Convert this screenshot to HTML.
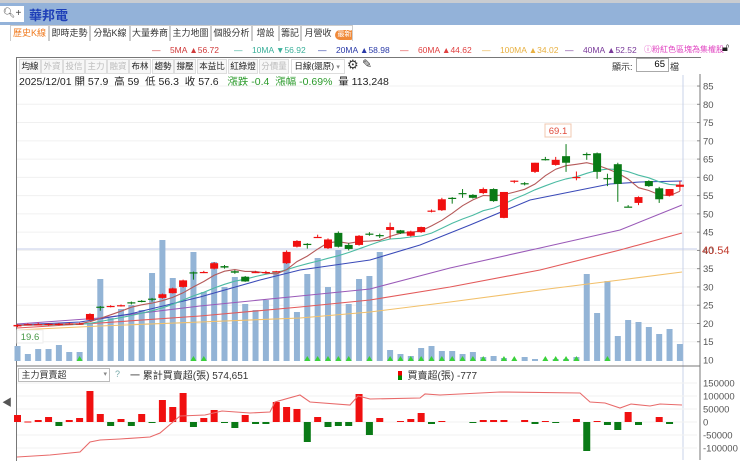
<!DOCTYPE html>
<html><head><meta charset="utf-8"><style>
body{margin:0;width:740px;height:460px;overflow:hidden;background:#fff;font-family:"Liberation Sans","Noto Sans CJK TC",sans-serif;position:relative}
.a{position:absolute;white-space:nowrap}
.tab{position:absolute;top:25px;height:15px;border:1px solid #ccc;border-bottom:none;font-size:9px;line-height:15px;text-align:center;color:#333;background:#fff;white-space:nowrap;overflow:hidden}
.tb{position:absolute;top:59px;height:13px;font-size:8.5px;line-height:13px;text-align:center;border:1px solid #ddd;background:#f7f7f7;color:#222;white-space:nowrap;overflow:hidden}
.g{color:#bbb}
.lg{position:absolute;top:45px;font-size:8.5px;white-space:nowrap}
</style></head><body>
<div class="a" style="left:0;top:0;width:740px;height:3px;background:#c9ccd1"></div>
<div class="a" style="left:0;top:3px;width:740px;height:22px;background:#93b2d9"></div>
<div class="a" style="left:0;top:6px;width:24px;height:16px;background:#fff;font-size:10px;line-height:16px;color:#444">&nbsp;🔍︎+</div>
<div class="a" style="left:29px;top:5px;font-size:13px;font-weight:bold;color:#1e3fb8">華邦電</div>
<div class="tab" style="left:10px;width:37px;color:#f07a1e">歷史K線</div>
<div class="tab" style="left:49px;width:39px">即時走勢</div>
<div class="tab" style="left:90px;width:38px">分點K線</div>
<div class="tab" style="left:130px;width:38px">大量券商</div>
<div class="tab" style="left:170px;width:39px">主力地圖</div>
<div class="tab" style="left:211px;width:39px">個股分析</div>
<div class="tab" style="left:252px;width:25px">增設</div>
<div class="tab" style="left:279px;width:20px">籌記</div>
<div class="tab" style="left:301px;width:50px;text-align:left">&nbsp;月營收<span style="display:inline-block;margin-left:3px;background:#f08a3a;color:#fff;border-radius:6px;font-size:7px;line-height:10px;padding:0 3px">最新</span></div>
<div class="lg" style="left:152px;color:#d03a3a">—&nbsp;&nbsp;&nbsp;&nbsp;5MA ▲56.72</div>
<div class="lg" style="left:234px;color:#3ab09a">—&nbsp;&nbsp;&nbsp;&nbsp;10MA ▼56.92</div>
<div class="lg" style="left:318px;color:#2a3aa8">—&nbsp;&nbsp;&nbsp;&nbsp;20MA ▲58.98</div>
<div class="lg" style="left:400px;color:#e04040">—&nbsp;&nbsp;&nbsp;&nbsp;60MA ▲44.62</div>
<div class="lg" style="left:482px;color:#e8b040">—&nbsp;&nbsp;&nbsp;&nbsp;100MA ▲34.02</div>
<div class="lg" style="left:565px;color:#7a3a9a">—&nbsp;&nbsp;&nbsp;&nbsp;40MA ▲52.52</div>
<div class="lg" style="left:644px;top:44px;font-size:8px;color:#e040c0">ⓘ粉紅色區塊為集權股</div>
<div class="a" style="top:42px;left:722px;font-size:11px;color:#222">🔓︎</div>
<div class="a" style="left:16px;top:57px;width:684px;height:403px;border-left:1px solid #777;border-top:1px solid #777"></div>
<div class="tb" style="left:19px;width:20px">均線</div>
<div class="tb g" style="left:41px;width:20px">外資</div>
<div class="tb g" style="left:63px;width:20px">投信</div>
<div class="tb g" style="left:85px;width:20px">主力</div>
<div class="tb g" style="left:107px;width:20px">融資</div>
<div class="tb" style="left:129px;width:20px">布林</div>
<div class="tb" style="left:152px;width:20px">趨勢</div>
<div class="tb" style="left:174px;width:20px">撐壓</div>
<div class="tb" style="left:197px;width:28px">本益比</div>
<div class="tb" style="left:228px;width:28px">紅綠燈</div>
<div class="tb g" style="left:259px;width:28px">分價量</div>
<div class="tb" style="left:291px;width:52px;background:#fff;text-align:left">&nbsp;日線(還原) <span style="color:#888;font-size:7px">▾</span></div>
<div class="a" style="left:347px;top:57px;font-size:13px;color:#333">⚙</div>
<div class="a" style="left:362px;top:57px;font-size:12px;color:#333">✎</div>
<div class="a" style="left:612px;top:60px;font-size:9px;color:#333">顯示:</div>
<div class="a" style="left:636px;top:58px;width:28px;height:12px;border:1px solid #aaa;font-size:9.5px;text-align:right;line-height:12px;padding-right:3px">65</div>
<div class="a" style="left:670px;top:60px;font-size:9px;color:#333">檔</div>
<div class="a" style="left:19px;top:74px;font-size:10.5px;color:#222">2025/12/01 開 57.9&nbsp; 高 59&nbsp; 低 56.3&nbsp; 收 57.6&nbsp;&nbsp; <span style="color:#2a9a2a">漲跌 -0.4&nbsp; 漲幅 -0.69%</span>&nbsp; 量 113,248</div>
<div class="a" style="left:18px;top:368px;width:90px;height:12px;border:1px solid #bbb;font-size:9px;line-height:12px;color:#333">&nbsp;主力買賣超<span style="float:right;font-size:7px;color:#888">▾&nbsp;</span></div>
<div class="a" style="left:115px;top:369px;font-size:9px;color:#7aa">?</div>
<div class="a" style="left:130px;top:367px;font-size:10px;color:#333">一 累計買賣超(張) 574,651</div>
<div class="a" style="left:398px;top:367px;font-size:10px;color:#333"><span style="display:inline-block;width:4px;height:9px;background:linear-gradient(#e00 50%,#080 50%);vertical-align:-1px"></span>&nbsp; 買賣超(張) -777</div>
<div class="a" style="left:2px;top:394px;font-size:10px;color:#555">◀</div>
<svg class="a" style="left:0;top:0" width="740" height="460" id="s"></svg>
<script>
var s=document.getElementById('s'),h='';
function Y(p){return 360-(p-10)*3.653}
function X(i){return 17.5+10.35*i}
for(var p=15;p<=85;p+=5){var y=Y(p);h+='<line x1="17" x2="697" y1="'+y+'" y2="'+y+'" stroke="#f0f0f0"/>';h+='<text x="703" y="'+(y+3.5)+'" font-size="9.5" fill="#555" font-family="Liberation Sans">'+p+'</text><line x1="697" x2="700" y1="'+y+'" y2="'+y+'" stroke="#888"/>'}
h+='<text x="703" y="363.5" font-size="9.5" fill="#555" font-family="Liberation Sans">10</text>';
h+='<line x1="17" x2="697" y1="249" y2="249" stroke="#c4cce8"/><text x="702" y="254" font-size="11" fill="#c0392b" font-family="Liberation Sans">40.54</text>';
h+='<line x1="683" x2="683" y1="75" y2="460" stroke="#c9d3ea"/><line x1="700" x2="700" y1="74" y2="460" stroke="#777"/>';
h+='<line x1="17" x2="700" y1="366" y2="366" stroke="#777"/>';
var v=[346,354,349,349,345,352,352,323,279,318,309,305,310,273,240,278,287,252,292,262,287,277,304,310,300,273,253,312,274,258,287,250,304,279,276,252,350,354,356,348,346,351,351,354,352,357,356,358,361,357,359,361,359,359,357,274,313,281,336,320,322,327,334,329,344];
for(var i=0;i<65;i++)h+='<rect x="'+(X(i)-3)+'" y="'+v[i]+'" width="6" height="'+(361-v[i])+'" fill="#93b4d6"/>';
[6,17,18,28,29,30,31,32,34,36,37,38,39,40,41,42,43,44,45,47,48,51,52,53,54,57].forEach(function(i){h+='<polygon points="'+(X(i)-3)+',361 '+(X(i)+3)+',361 '+X(i)+',356" fill="#3ad13a"/>'});
var c=[[19.2,19.8,19,19.6],[19.8,20,19.6,19.8],[19.8,20.2,19.6,19.8],[19.6,20,19.4,19.9],[19.7,20.1,19.5,19.9],[19.9,20.2,19.7,20],[19.9,20.2,19.7,20],[21,22.8,20.8,22.6],[24.6,24.8,23.5,24.4],[24.6,25,24.4,24.8],[24.8,25.2,24.6,25],[25.8,26,25.2,25.5],[26.2,26.4,25.8,25.9],[26.8,27,26,26.7],[27,28.2,26.8,28],[28.3,29.8,28.2,29.6],[30,32,29.8,31.8],[34,34.2,32,33.9],[34,34.4,33.8,34.1],[35,36.8,34.8,36.5],[35.7,36,35,35.3],[34.3,34.6,33.6,33.9],[32.8,33,31.4,31.5],[34,34.4,33.8,34.1],[34,34.4,33.6,34.1],[34.2,34.4,34,34.3],[36.5,40,36.3,39.6],[41,42.8,40.8,42.6],[41.8,42,40.5,41.6],[43.6,44.3,43.4,43.7],[40.6,43.3,40.4,43],[44.8,45.2,40.8,41],[41.5,42,40,40.4],[41.5,44.2,41.3,44],[44.6,45,44,44.3],[44.2,44.6,43.4,44.1],[45.6,47.6,43.2,46.4],[45.5,45.6,44.5,44.7],[44,45.4,43.8,45.2],[45,46.5,44.8,46.4],[50.8,51.2,50.4,50.9],[51,54.4,50.8,54],[54.4,54.6,52.8,54.3],[55.7,56.8,54.4,55.6],[55.2,55.4,54.2,54.4],[55.7,57.2,55.4,56.8],[56.8,57,53.3,53.5],[48.9,56,48.8,56],[59,59.2,58.4,59.1],[58.4,58.7,57.8,58.3],[61.5,64,61.2,64],[65,65.6,64.6,64.9],[63.4,65.6,63.2,64.8],[65.8,69.1,61.5,64],[60,61.6,59.2,60.1],[66.4,66.8,64.8,66.3],[66.6,66.8,59.6,61.5],[59.8,61,57.6,59.7],[63.6,64,53.3,58.2],[52,52.4,51.8,51.9],[53,54.8,52.4,54.6],[59,59.2,57.4,57.6],[57,57.4,53,54],[55,56.8,54.8,56.8],[57.4,59,56.3,58],[57.9,58.2,57.4,57.6]];
var closes=[];for(i=0;i<65;i++)closes.push(c[i][3]);
function ma(n){var a=[];for(var i=0;i<65;i++){var t=0;for(var k=i-n+1;k<=i;k++)t+=(k<0?19.5:closes[k]);a.push(X(i)+','+Y(t/n).toFixed(1))}return a.join(' ')}
function pl(pts,col){h+='<polyline points="'+pts+'" fill="none" stroke="'+col+'" stroke-width="1.1"/>'}
pl('17,330 100,326 200,322 300,318 370,312 450,302 540,290 620,280 682,272','#f2c06a');
pl('17,328 100,323 200,316 300,307 370,300 450,287 540,270 620,250 682,233','#e35a5a');
pl('17,324 100,318 200,306 300,296 370,289 450,268 540,248 620,230 682,205','#9a5ab8');
pl('17,325 80,322 130,314 200,297 260,280 300,270 370,260 420,245 470,225 530,200 580,190 610,184 640,182 682,181','#3a4ab8');
pl(ma(10),'#4cbba3');pl(ma(5),'#b55a5a');
for(i=0;i<65;i++){var o=c[i][0],hi=c[i][1],lo=c[i][2],cl=c[i][3],col=cl>=o?'#f01010':'#0a7a16',x=X(i);
h+='<line x1="'+x+'" x2="'+x+'" y1="'+Y(hi)+'" y2="'+Y(lo)+'" stroke="'+col+'"/>';
var t=Y(Math.max(o,cl)),b=Y(Math.min(o,cl));h+='<rect x="'+(x-4)+'" y="'+t+'" width="8" height="'+Math.max(1.2,b-t)+'" fill="'+col+'"/>'}
h+='<rect x="545" y="124" width="26" height="13" fill="#fff" stroke="#f0c8b0"/><text x="558" y="134" text-anchor="middle" font-size="9.5" fill="#e04a3a" font-family="Liberation Sans">69.1</text>';
h+='<rect x="17" y="330" width="26" height="13" fill="#fff" stroke="#eee"/><text x="30" y="340" text-anchor="middle" font-size="9.5" fill="#4a9a4a" font-family="Liberation Sans">19.6</text>';
var lv=[[150000,383],[100000,396],[50000,409],[0,422],[-50000,435],[-100000,448]];
lv.forEach(function(a){h+='<line x1="17" x2="697" y1="'+a[1]+'" y2="'+a[1]+'" stroke="#f2f2f2"/><text x="703" y="'+(a[1]+3.5)+'" font-size="9.5" fill="#555" font-family="Liberation Sans">'+a[0]+'</text>'});
var d=[7,0.5,2,5,-4,2,4,31,8,-4,3,-4,8,-1,22,15,29,-5,4,12,-1,-6,7,-2,-2,20,15,13,-20,5,-5,-4,-4,28,-13,4,0,1,3,9,-2,1,0,0,-1,2,2,2,0,2,-2,1,-1,0,3,-29,1,-3,-8,10,-3,0,5,-2,0];
for(i=0;i<65;i++){if(!d[i])continue;var col=d[i]>0?'#f01010':'#0a7a16';h+='<rect x="'+(X(i)-3.5)+'" y="'+(d[i]>0?422-d[i]:422)+'" width="7" height="'+Math.max(1,Math.abs(d[i]))+'" fill="'+col+'"/>'}
pl('17,457 50,455 80,452 90,442 100,440 120,439 150,437 160,433 180,416 205,415 222,411 250,413 270,412 275,402 300,395 310,402 350,405 358,396 370,399 420,398 425,394 440,395 500,392 580,393 590,402 605,403 620,408 631,404 650,406 660,404 682,405','#e86a6a');
s.innerHTML=h;
</script>
</body></html>
